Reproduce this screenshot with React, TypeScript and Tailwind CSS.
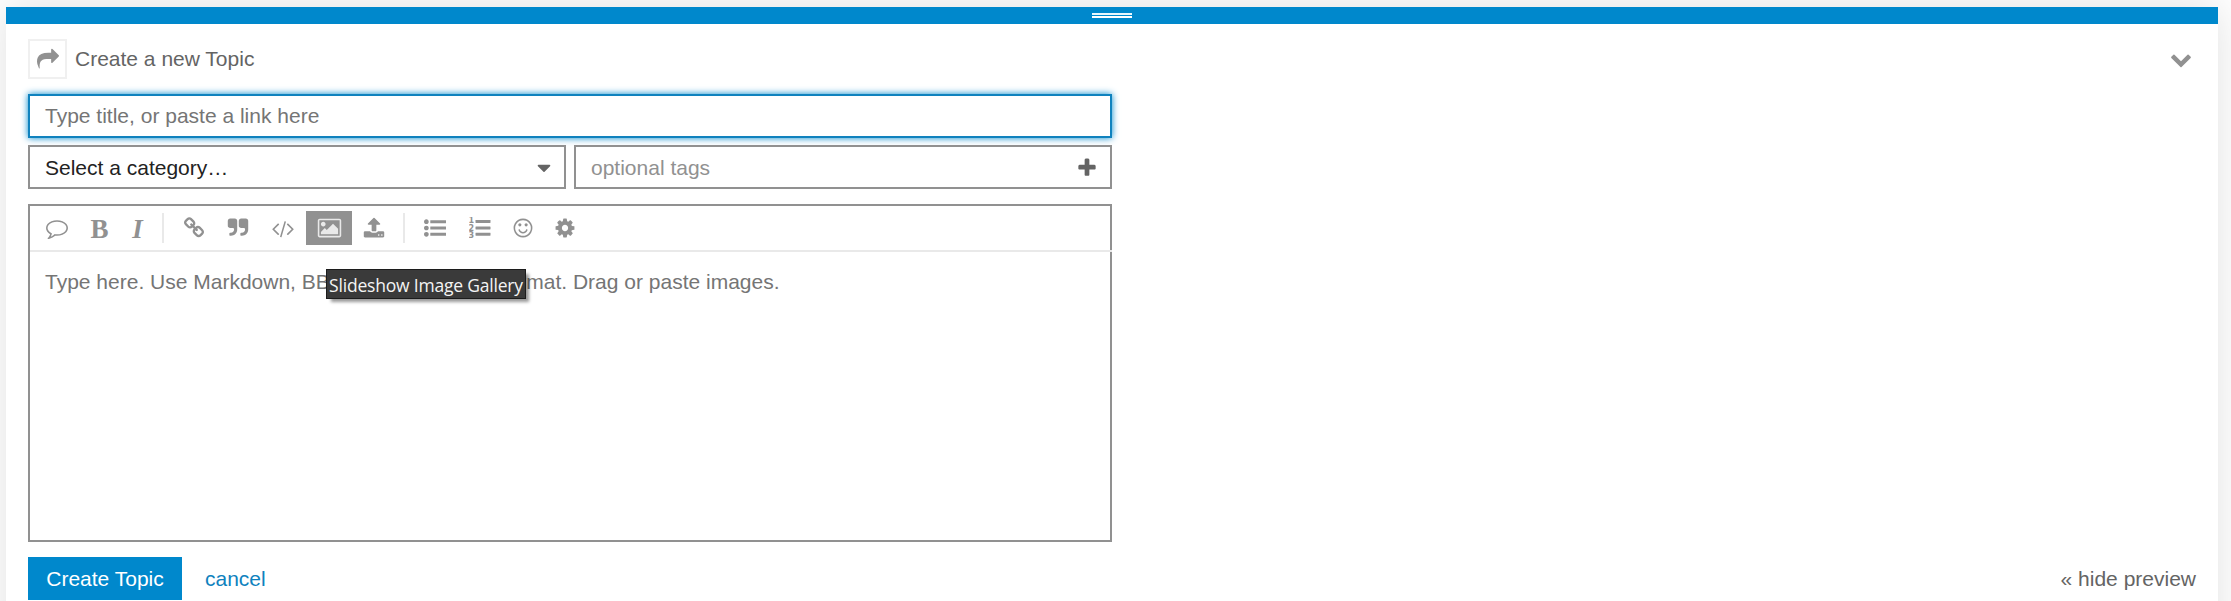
import React from "react";

const paths = {
  plus: "M1600 736v192q0 40-28 68t-68 28h-416v416q0 40-28 68t-68 28h-192q-40 0-68-28t-28-68v-416h-416q-40 0-68-28t-28-68v-192q0-40 28-68t68-28h416v-416q0-40 28-68t68-28h192q40 0 68 28t28 68v416h416q40 0 68 28t28 68z",
  share: "M1792 640q0 26-19 45l-512 512q-19 19-45 19t-45-19-19-45v-256h-224q-98 0-175.5 6t-154 21.5-133 42.5-105.5 69.5-80 101-48.5 138.5-17.5 181q0 55 5 123 0 6 2.5 23.5t2.5 26.5q0 15-8.5 25t-23.5 10q-16 0-28-17-7-9-13-22t-13.5-30-10.5-24q-127-285-127-451 0-199 53-333 162-403 875-403h224v-256q0-26 19-45t45-19 45 19l512 512q19 19 19 45z",
  chevron: "M1683 808l-742 741q-19 19-45 19t-45-19l-742-741q-19-19-19-45.5t19-45.5l166-165q19-19 45-19t45 19l531 531 531-531q19-19 45-19t45 19l166 165q19 19 19 45.5t-19 45.5z",
  caret: "M1408 704q0 26-19 45l-448 448q-19 19-45 19t-45-19l-448-448q-19-19-19-45t19-45 45-19h896q26 0 45 19t19 45z",
  comment: "M896 384q-204 0-381.5 69.5t-282 187.5-104.5 255q0 112 71.5 213.5t201.5 175.5l87 50-27 96q-24 91-70 172 152-63 275-171l43-38 57 6q69 8 130 8 204 0 381.5-69.5t282-187.5 104.5-255-104.5-255-282-187.5-381.5-69.5zm896 512q0 174-120 321.5t-326 233-450 85.5q-70 0-145-8-198 175-460 242-49 14-114 22h-5q-15 0-27-10.5t-16-27.5v-1q-3-4-.5-12t2-10 4.5-9.5l6-9 7-8.5 8-9q7-8 31-34.5t34.5-38 31-39.5 32.5-51 27-59 26-76q-157-89-247.5-220t-90.5-281q0-174 120-321.5t326-233 450-85.5 450 85.5 326 233 120 321.5z",
  link: "M1520 1216q0-40-28-68l-208-208q-28-28-68-28-42 0-72 32 3 3 19 18.5t21.5 21.5 15 19 13 25.5 3.5 27.5q0 40-28 68t-68 28q-15 0-27.5-3.5t-25.5-13-19-15-21.5-21.5-18.5-19q-33 31-33 73 0 40 28 68l206 207q27 27 68 27 40 0 68-26l147-146q28-28 28-67zm-703-705q0-40-28-68l-206-207q-28-28-68-28-39 0-68 27l-147 146q-28 28-28 67 0 40 28 68l208 208q27 27 68 27 42 0 72-31-3-3-19-18.5t-21.5-21.5-15-19-13-25.5-3.5-27.5q0-40 28-68t68-28q15 0 27.5 3.5t25.5 13 19 15 21.5 21.5 18.5 19q33-31 33-73zm895 705q0 120-85 203l-147 146q-83 83-203 83-121 0-204-85l-206-207q-83-83-83-203 0-123 88-209l-88-88q-86 88-208 88-120 0-204-84l-208-208q-84-84-84-204t85-203l147-146q83-83 203-83 121 0 204 85l206 207q83 83 83 203 0 123-88 209l88 88q86-88 208-88 120 0 204 84l208 208q84 84 84 204z",
  quote: "M832 320v704q0 104-40.5 198.5t-109.5 163.5-163.5 109.5-198.5 40.5h-64q-26 0-45-19t-19-45v-128q0-26 19-45t45-19h64q106 0 181-75t75-181v-32q0-40-28-68t-68-28h-224q-80 0-136-56t-56-136v-384q0-80 56-136t136-56h384q80 0 136 56t56 136zm896 0v704q0 104-40.5 198.5t-109.5 163.5-163.5 109.5-198.5 40.5h-64q-26 0-45-19t-19-45v-128q0-26 19-45t45-19h64q106 0 181-75t75-181v-32q0-40-28-68t-68-28h-224q-80 0-136-56t-56-136v-384q0-80 56-136t136-56h384q80 0 136 56t56 136z",
  code: "M681 1399l-50 50q-10 10-23 10t-23-10l-466-466q-10-10-10-23t10-23l466-466q10-10 23-10t23 10l50 50q10 10 10 23t-10 23l-393 393 393 393q10 10 10 23t-10 23zm591-1067l-373 1291q-4 13-15.5 19.5t-23.5 2.5l-62-17q-13-4-19.5-15.5t-2.5-24.5l373-1291q4-13 15.5-19.5t23.5-2.5l62 17q13 4 19.5 15.5t2.5 24.5zm657 651l-466 466q-10 10-23 10t-23-10l-50-50q-10-10-10-23t10-23l393-393-393-393q-10-10-10-23t10-23l50-50q10-10 23-10t23 10l466 466q10 10 10 23t-10 23z",
  picture: "M704 576q0 80-56 136t-136 56-136-56-56-136 56-136 136-56 136 56 56 136zm1024 384v448h-1408v-192l320-320 160 160 512-512zm96-704h-1600q-13 0-22.5 9.5t-9.5 22.5v1216q0 13 9.5 22.5t22.5 9.5h1600q13 0 22.5-9.5t9.5-22.5v-1216q0-13-9.5-22.5t-22.5-9.5zm160 32v1216q0 66-47 113t-113 47h-1600q-66 0-113-47t-47-113v-1216q0-66 47-113t113-47h1600q66 0 113 47t47 113z",
  upload: "M1344 1472q0-26-19-45t-45-19-45 19-19 45 19 45 45 19 45-19 19-45zm256 0q0-26-19-45t-45-19-45 19-19 45 19 45 45 19 45-19 19-45zm128-224v320q0 40-28 68t-68 28h-1472q-40 0-68-28t-28-68v-320q0-40 28-68t68-28h427q21 56 70.5 92t110.5 36h256q61 0 110.5-36t70.5-92h427q40 0 68 28t28 68zm-325-648q-17 40-59 40h-256v448q0 26-19 45t-45 19h-256q-26 0-45-19t-19-45v-448h-256q-42 0-59-40-17-39 14-69l448-448q18-19 45-19t45 19l448 448q31 30 14 69z",
  list: "M384 1408q0 80-56 136t-136 56-136-56-56-136 56-136 136-56 136 56 56 136zm0-512q0 80-56 136t-136 56-136-56-56-136 56-136 136-56 136 56 56 136zm1408 416v192q0 13-9.5 22.5t-22.5 9.5h-1216q-13 0-22.5-9.5t-9.5-22.5v-192q0-13 9.5-22.5t22.5-9.5h1216q13 0 22.5 9.5t9.5 22.5zm-1408-928q0 80-56 136t-136 56-136-56-56-136 56-136 136-56 136 56 56 136zm1408 416v192q0 13-9.5 22.5t-22.5 9.5h-1216q-13 0-22.5-9.5t-9.5-22.5v-192q0-13 9.5-22.5t22.5-9.5h1216q13 0 22.5 9.5t9.5 22.5zm0-512v192q0 13-9.5 22.5t-22.5 9.5h-1216q-13 0-22.5-9.5t-9.5-22.5v-192q0-13 9.5-22.5t22.5-9.5h1216q13 0 22.5 9.5t9.5 22.5z",
  smile: "M1262 1075q-37 121-138 195t-228 74-228-74-138-195q-8-25 4-48.5t38-31.5q25-8 48.5 4t31.5 38q25 80 92.5 129.5t151.5 49.5 151.5-49.5 92.5-129.5q8-26 32-38t49-4 37 31.5 4 48.5zm-494-435q0 53-37.5 90.5t-90.5 37.5-90.5-37.5-37.5-90.5 37.5-90.5 90.5-37.5 90.5 37.5 37.5 90.5zm512 0q0 53-37.5 90.5t-90.5 37.5-90.5-37.5-37.5-90.5 37.5-90.5 90.5-37.5 90.5 37.5 37.5 90.5zm256 256q0-130-51-248.5t-136.5-204-204-136.5-248.5-51-248.5 51-204 136.5-136.5 204-51 248.5 51 248.5 136.5 204 204 136.5 248.5 51 248.5-51 204-136.5 136.5-204 51-248.5zm128 0q0 209-103 385.5t-279.5 279.5-385.5 103-385.5-103-279.5-279.5-103-385.5 103-385.5 279.5-279.5 385.5-103 385.5 103 279.5 279.5 103 385.5z",
  cog: "M1152 896q0-106-75-181t-181-75-181 75-75 181 75 181 181 75 181-75 75-181zm512-109v222q0 12-8 23t-20 13l-185 28q-19 54-39 91 35 50 107 138 10 12 10 25t-9 23q-27 37-99 108t-94 71q-12 0-26-9l-138-108q-44 23-91 38-16 136-29 186-7 28-36 28h-222q-14 0-24.5-8.5t-11.5-21.5l-28-184q-49-16-90-37l-141 107q-10 9-25 9-14 0-25-11-126-114-165-168-7-10-7-23 0-12 8-23 15-21 51-66.5t54-70.5q-27-50-41-99l-183-27q-13-2-21-12.5t-8-23.5v-222q0-12 8-23t19-13l186-28q14-46 39-92-40-57-107-138-10-12-10-24 0-10 9-23 26-36 98.5-107.5t94.5-71.5q13 0 26 10l138 107q44-23 91-38 16-136 29-186 7-28 36-28h222q14 0 24.5 8.5t11.5 21.5l28 184q49 16 90 37l142-107q9-9 24-9 13 0 25 10 129 119 165 170 7 8 7 22 0 12-8 23-15 21-51 66.5t-54 70.5q26 50 41 98l183 28q13 2 21 12.5t8 23.5z",
};

type IconName = keyof typeof paths;

function Icon({ name, wide = false, className = "w-[22px] h-[22px]" }: { name: IconName; wide?: boolean; className?: string }) {
  return (
    <svg viewBox={wide ? "0 0 2048 1792" : "0 0 1792 1792"} className={`shrink-0 fill-current ${className}`} aria-hidden="true">
      <path d={paths[name]} />
    </svg>
  );
}

function NumberedListIcon() {
  return (
    <svg viewBox="0 0 22 22" className="h-[22px] w-[22px] shrink-0 fill-current" aria-hidden="true">
      <g className="font-['DejaVu_Sans',sans-serif] text-[8px] font-bold">
        <text x="-0.5" y="6.3">1</text>
        <text x="-0.5" y="13.8">2</text>
        <text x="-0.5" y="21.3">3</text>
      </g>
      <rect x="6.5" y="3" width="15" height="3" rx="0.4" />
      <rect x="6.5" y="9.5" width="15" height="3" rx="0.4" />
      <rect x="6.5" y="15.7" width="15" height="3" rx="0.4" />
    </svg>
  );
}

function Tool({ className, children }: { className: string; children: React.ReactNode }) {
  return <button className={`flex h-[34px] shrink-0 items-center justify-center ${className}`}>{children}</button>;
}

function Separator({ className }: { className: string }) {
  return <div className={`h-[30px] w-0.5 shrink-0 bg-[#e9e9e9] ${className}`} />;
}

export default function App() {
  return (
    <div className="h-[601px] w-[2231px] overflow-hidden bg-white pt-[7px] pl-[6px] font-['Liberation_Sans',Arial,sans-serif] text-[21px] leading-[24px] text-[#646464]">
      <div className="flex h-[640px] w-[2212px] flex-col bg-white shadow-[0_-1px_40px_rgba(0,0,0,0.12)]">
        <div className="flex h-[17px] shrink-0 flex-col items-center gap-px bg-[#0088cc] pt-[6px]">
          <div className="h-0.5 w-10 bg-[#e8f6fc]" />
          <div className="h-0.5 w-10 bg-white" />
        </div>

        <div className="flex flex-col pr-[22px] pl-[22px]">
          <header className="mt-[15px] flex h-10 items-center">
            <button className="flex h-10 w-[39px] items-center justify-center border-2 border-[#f0f0f0] text-[#919191]">
              <Icon name="share" />
            </button>
            <span className="ml-2">Create a new Topic</span>
            <button className="mr-[4px] ml-auto text-[#919191]">
              <Icon name="chevron" />
            </button>
          </header>

          <div className="mt-[15px] flex h-11 w-[1084px] items-center border-2 border-[#0f82be] px-[15px] text-[#757575] shadow-[0_0_7px_#0088cc]">
            Type title, or paste a link here
          </div>

          <div className="mt-[7px] flex w-[1084px] gap-2">
            <div className="flex h-11 w-[538px] items-center justify-between border-2 border-[#919191] pt-px pr-[9px] pl-[15px] text-[#222]">
              Select a category…
              <Icon name="caret" className="h-[22px] w-[22px] text-[#646464]" />
            </div>
            <div className="flex h-11 w-[538px] items-center justify-between border-2 border-[#919191] pt-px pr-3 pl-[15px] text-[#919191]">
              optional tags
              <Icon name="plus" className="h-[22px] w-[22px] text-[#646464]" />
            </div>
          </div>

          <section className="relative mt-[15px] h-[338px] w-[1084px] border-2 border-[#919191]">
            <div className="-mr-0.5 flex h-[46px] items-center border-b-2 border-[#e9e9e9] pl-[5px] text-[#919191]">
              <Tool className="w-[43px]"><Icon name="comment" /></Tool>
              <Tool className="w-[43px] pt-px font-['Liberation_Serif',serif] text-[27px] font-bold">B</Tool>
              <Tool className="w-[32px] pt-px pl-px font-['Liberation_Serif',serif] text-[27px] font-bold italic">I</Tool>
              <Separator className="mx-[9px]" />
              <Tool className="w-[42px]"><Icon name="link" /></Tool>
              <Tool className="w-[45px]"><Icon name="quote" /></Tool>
              <Tool className="w-[46px]"><Icon name="code" wide className="h-[21px] w-[24px]" /></Tool>
              <Tool className="w-[46px] bg-[#919191] text-[#e9e9e9]"><Icon name="picture" wide className="h-[22px] w-[25px]" /></Tool>
              <Tool className="w-[44px]"><Icon name="upload" /></Tool>
              <Separator className="mx-[7px]" />
              <Tool className="w-[45px]"><Icon name="list" /></Tool>
              <Tool className="w-[46px]"><NumberedListIcon /></Tool>
              <Tool className="w-[40px]"><Icon name="smile" /></Tool>
              <Tool className="w-[44px]"><Icon name="cog" /></Tool>
            </div>
            <p className="px-[15px] pt-[18px] text-[#757575]">
              Type here. Use Markdown, BBCode, or HTML to format. Drag or paste images.
            </p>
            <div className="absolute top-[63px] left-[296px] flex h-[30px] w-[200px] items-center justify-center border border-[#1c1c1c] bg-[#3a3a3a] pt-px font-['Open_Sans',sans-serif] text-[17.5px] tracking-[-0.2px] whitespace-nowrap text-[#f4f4f4] shadow-[4px_4px_3px_-1px_rgba(0,0,0,0.4)]">
              Slideshow Image Gallery
            </div>
          </section>

          <footer className="mt-[15px] flex h-[43px] items-center">
            <button className="h-[43px] w-[154px] bg-[#0088cc] text-white">Create Topic</button>
            <a className="ml-[23px] text-[#0f82be]">cancel</a>
            <a className="ml-auto">« hide preview</a>
          </footer>
        </div>
      </div>
    </div>
  );
}
